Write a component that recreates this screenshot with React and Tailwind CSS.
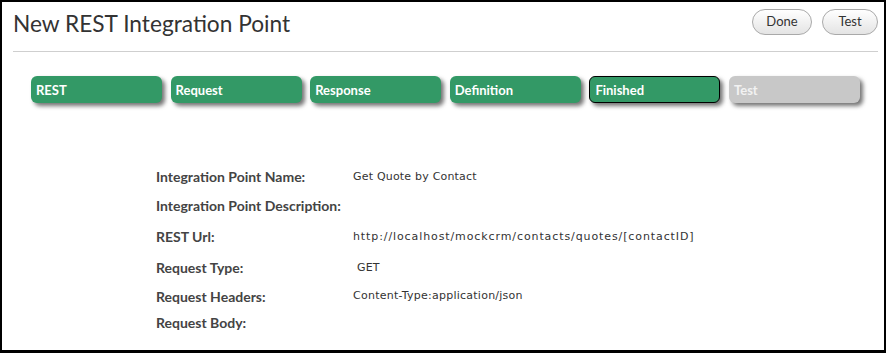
const STEPS = [
  { label: 'REST', className: 'bg-[#339966] text-white' },
  { label: 'Request', className: 'bg-[#339966] text-white' },
  { label: 'Response', className: 'bg-[#339966] text-white' },
  { label: 'Definition', className: 'bg-[#339966] text-white' },
  { label: 'Finished', className: 'bg-[#339966] text-white border border-black pt-[2px]' },
  { label: 'Test', className: 'bg-[#c8c8c8] text-[#f2f2f2]' },
]

const FIELDS = [
  { label: 'Integration Point Name:', value: 'Get Quote by Contact', row: 'h-[29px]', val: 'pt-[2px] tracking-[0.2px]' },
  { label: 'Integration Point Description:', value: '', row: 'h-[29px]', val: '' },
  { label: 'REST Url:', value: 'http://localhost/mockcrm/contacts/quotes/[contactID]', row: 'h-[33px]', val: 'pt-[2px] tracking-[0.9px]' },
  { label: 'Request Type:', value: 'GET', row: 'h-[29px]', val: 'pt-[2px] pl-[4px] tracking-[0.2px]' },
  { label: 'Request Headers:', value: 'Content-Type:application/json', row: 'h-[29px]', val: 'tracking-[0.25px]' },
  { label: 'Request Body:', value: '', row: 'h-[23px]', val: '' },
]

function PillButton({ children, className }) {
  return (
    <button
      className={`h-[26px] rounded-full border border-[#a9a9a9] bg-gradient-to-b from-white to-[#e4e4e4] text-[13px] text-[#333] font-['Lato',sans-serif] ${className}`}
    >
      {children}
    </button>
  )
}

export default function App() {
  return (
    <div className="w-[886px] h-[353px] bg-white border-l-2 border-t-2 border-r-2 border-b-[3px] border-black overflow-hidden font-['Lato',sans-serif]">
      {/* Header */}
      <div className="ml-[11px] mr-[6px] h-[50px] flex items-start justify-between border-b border-[#cfcfcf]">
        <h1 className="mt-[8px] text-[22.7px] leading-[28px] text-[#333]">New REST Integration Point</h1>
        <div className="flex gap-[10px] mt-[7px]">
          <PillButton className="w-[60px]">Done</PillButton>
          <PillButton className="w-[56px]">Test</PillButton>
        </div>
      </div>

      {/* Steps */}
      <div className="flex gap-[8.6px] pl-[29px] mt-[24px]">
        {STEPS.map((s) => (
          <div
            key={s.label}
            className={`w-[131px] h-[27px] rounded-[6px] shadow-[3px_3px_4px_rgba(0,0,0,0.55)] flex items-center px-[5px] pt-[2px] text-[13px] font-bold ${s.className}`}
          >
            {s.label}
          </div>
        ))}
      </div>

      {/* Details */}
      <div className="mt-[59px] pl-[154px]">
        {FIELDS.map((f) => (
          <div key={f.label} className={`flex items-center ${f.row}`}>
            <div className="w-[197px] text-[14px] font-bold text-[#444]">{f.label}</div>
            <div className={`text-[11px] text-[#333] font-['DejaVu_Sans',sans-serif] ${f.val}`}>{f.value}</div>
          </div>
        ))}
      </div>
    </div>
  )
}
